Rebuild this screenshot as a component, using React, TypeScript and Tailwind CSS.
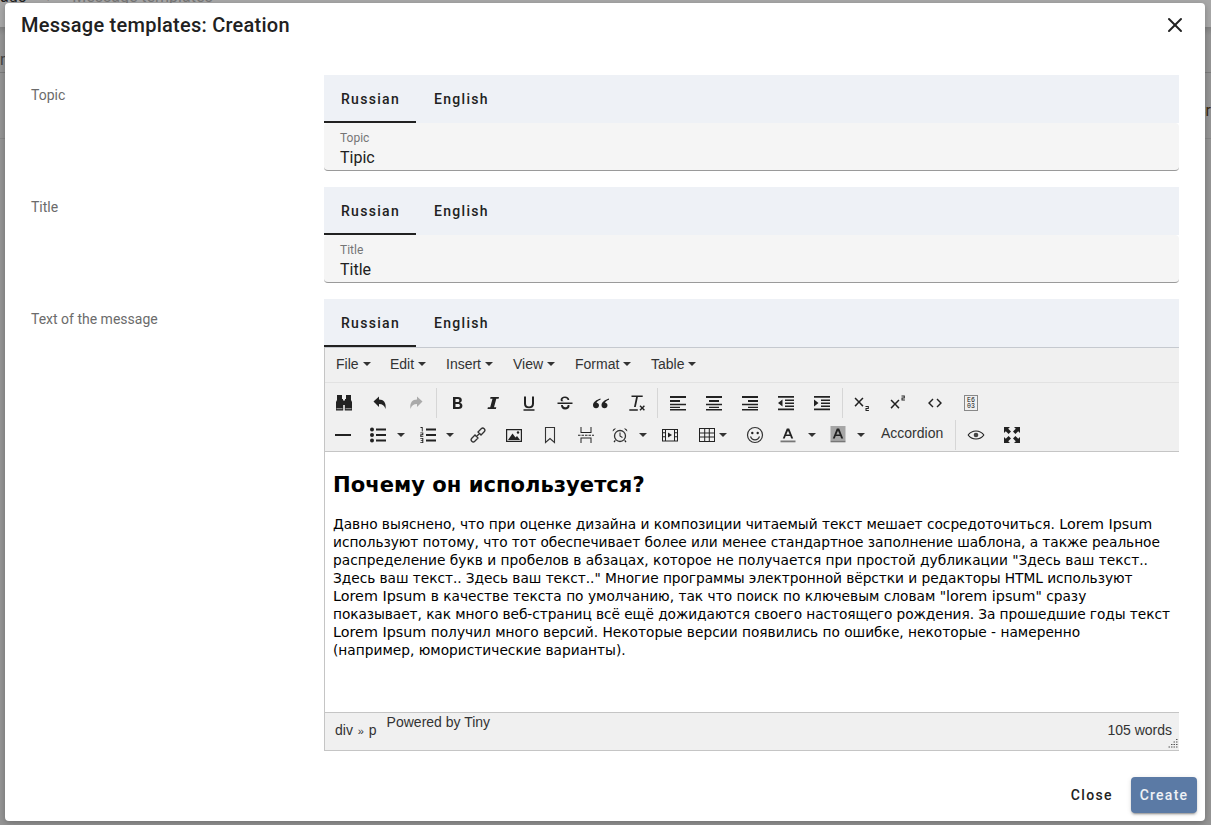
import { ReactNode } from "react";
import { X } from "lucide-react";

const Ico = ({ children, w = 18, h = 18 }: { children: ReactNode; w?: number; h?: number }) => (
  <svg width={w} height={h} viewBox="0 0 18 18" fill="#222" stroke="none">
    {children}
  </svg>
);

const icons: Record<string, ReactNode> = {
  find: (
    <Ico>
      <path d="M2 1h5v4h1v1.500h2V5h1V1h5v5l1 2v8.500H9.800V11H8.200v5.500H1V8l1-2z" />
      <path d="M1.500 14.700h6M10.500 14.700h6" stroke="#ddd" strokeWidth="0.700" fill="none" />
    </Ico>
  ),
  undo: (
    <Ico>
      <path d="M2.500 7.500 8 2.500v3c4.500 0 7.500 3 6.500 9.500-1-3.500-3-5-6.500-5v3z" />
    </Ico>
  ),
  redo: (
    <Ico>
      <path d="M15.500 7.500 10 2.500v3c-4.500 0-7.500 3-6.500 9.500 1-3.500 3-5 6.500-5v3z" fill="#aaa" />
    </Ico>
  ),
  bold: (
    <Ico>
      <path fillRule="evenodd" d="M5 3h5c2.500 0 3.800 1.200 3.800 3.100 0 1.300-.7 2.200-1.800 2.600 1.500.4 2.400 1.500 2.400 3 0 2.100-1.500 3.300-4 3.300H5zM7.500 5v3h2.200c1 0 1.600-.5 1.600-1.500S10.700 5 9.700 5zM7.500 10v3h2.600c1.100 0 1.800-.5 1.800-1.500S11.200 10 10.100 10z" />
    </Ico>
  ),
  italic: (
    <Ico>
      <path d="M6.500 3H15l-.4 1.800h-2.300L10 13.200h2.300L11.900 15H3.500l.4-1.800h2.300l2.300-8.400H6.200z" />
    </Ico>
  ),
  underline: (
    <Ico>
      <path d="M4 2.500h2v7c0 2 1 3 3 3s3-1 3-3v-7h2v7.200c0 3-1.800 4.600-5 4.600s-5-1.600-5-4.600zM3.500 15.300h11v1.500h-11z" />
    </Ico>
  ),
  strike: (
    <Ico>
      <path d="M1.500 8.500h15V10h-15z" />
      <path d="M13.300 6H11.500c-.2-1.200-1.100-1.900-2.500-1.900-1.500 0-2.500.7-2.500 1.700 0 .7.400 1.200 1.300 1.500H5.200C4.800 6.900 4.600 6.400 4.600 5.800 4.600 3.900 6.400 2.600 9 2.600c2.500 0 4.100 1.300 4.300 3.400zM5 11h1.800c.2 1.300 1.100 2.200 2.300 2.200 1.500 0 2.500-.7 2.500-1.800 0-.2 0-.3-.1-.4h1.800c.1.300.2.600.2.900 0 2-1.800 3.500-4.400 3.500S5.100 14 5 11z" />
    </Ico>
  ),
  quote: (
    <Ico>
      <path d="M8.500 4.500C4.500 5.800 1 8 1 11.200c0 1.900 1.400 3 3 3 1.700 0 3-1.200 3-2.800S5.800 8.700 4.500 8.700c.6-1.300 2-2.200 4-3zM17 4.500C13 5.800 9.500 8 9.500 11.200c0 1.900 1.400 3 3 3 1.700 0 3-1.200 3-2.800s-1.200-2.700-2.500-2.700c.6-1.300 2-2.200 4-3z" />
    </Ico>
  ),
  clear: (
    <Ico>
      <path d="M3.500 1.500h11.200v1.600h-4.800L7.800 13H6l2.100-9.900H3.500zM1.300 15.300h8.500v1.400H1.300zM11.500 12.300l1 -1 1.700 1.700 1.700-1.700 1 1-1.700 1.700 1.700 1.700-1 1-1.700-1.700-1.700 1.700-1-1 1.700-1.700z" />
    </Ico>
  ),
  alignLeft: (
    <Ico>
      <path d="M1 2h16v2H1zM1 6h10v2H1zM1 9.700h16v1.500H1zM1 12.700h10v1.300H1zM1 15h16v1.500H1z" />
    </Ico>
  ),
  alignCenter: (
    <Ico>
      <path d="M1 2h16v2H1zM4 6h10v2H4zM1 9.700h16v1.500H1zM4 12.700h10v1.300H4zM1 15h16v1.500H1z" />
    </Ico>
  ),
  alignRight: (
    <Ico>
      <path d="M1 2h16v2H1zM7 6h10v2H7zM1 9.700h16v1.500H1zM7 12.700h10v1.300H7zM1 15h16v1.500H1z" />
    </Ico>
  ),
  outdent: (
    <Ico>
      <path d="M1 2h16v1.700H1zM8 5.500h9v1.500H8zM8 8.500h9V10H8zM8 11.500h9V13H8zM1 14.500h16v1.700H1zM5.500 5.500v7L1 9z" />
    </Ico>
  ),
  indent: (
    <Ico>
      <path d="M1 2h16v1.700H1zM8 5.500h9v1.500H8zM8 8.500h9V10H8zM8 11.500h9V13H8zM1 14.500h16v1.700H1zM1 5.500v7L5.500 9z" />
    </Ico>
  ),
  sub: (
    <Ico>
      <path d="m1.500 4.500 1.100-1.100L6 7l3.400-3.600 1.100 1.100L7 8l3.500 3.600-1.100 1.100L6 9.100l-3.400 3.600-1.100-1.100L5 8zM12.500 12h3.300v3h-2.300v1h2.400v1h-3.400v-3h2.300v-1h-2.300z" />
    </Ico>
  ),
  sup: (
    <Ico>
      <path d="m1.500 6.500 1.100-1.100L6 9l3.400-3.600 1.100 1.100L7 10l3.500 3.600-1.100 1.100L6 11.100l-3.400 3.600-1.100-1.100L5 10zM12.500 1.500h3.300v3h-2.300v1h2.400v1h-3.400v-3h2.300v-1h-2.300z" />
    </Ico>
  ),
  code: (
    <Ico>
      <path d="m6.500 4.500 1 1L4 9l3.500 3.500-1 1L2 9zM11.500 4.500l-1 1L14 9l-3.500 3.500 1 1L16 9z" />
    </Ico>
  ),
  charmap: (
    <svg width={18} height={18} viewBox="0 0 18 18">
      <rect x="2.500" y="1.500" width="13" height="15" fill="none" stroke="#888" strokeWidth="1" />
      <text x="9" y="8" fontSize="6.500" textAnchor="middle" fontFamily="Liberation Mono, monospace" fill="#111">E6</text>
      <text x="9" y="14" fontSize="6.500" textAnchor="middle" fontFamily="Liberation Mono, monospace" fill="#111">03</text>
    </svg>
  ),
  hr: (
    <Ico>
      <path d="M1 8h16v2H1z" />
    </Ico>
  ),
  bullist: (
    <Ico>
      <circle cx="3" cy="3.500" r="2" />
      <circle cx="3" cy="9" r="2" />
      <circle cx="3" cy="14.500" r="2" />
      <path d="M7 2.500h10v2H7zM7 8h10v2H7zM7 13.500h10v2H7z" />
    </Ico>
  ),
  numlist: (
    <Ico>
      <path d="M7 2.500h10v2H7zM7 8h10v2H7zM7 13.500h10v2H7z" />
      <path d="M1.500 1h2.200v4.500H2.800V2H1.500zM1.300 6.500h3v2.700H2.300v1h2v.8h-3V8.300h2v-1h-2zM1.300 12h3v5h-3v-.8h2V15h-1.500v-.8h1.500v-1.400h-2z" />
    </Ico>
  ),
  link: (
    <Ico>
      <g fill="none" stroke="#333" strokeWidth="1.300">
        <path d="M7.500 10.500 6 9 2.800 12.200a2.100 2.100 0 0 0 3 3L9 12l-1-1" />
        <path d="M10.500 7.500 12 9l3.200-3.200a2.100 2.100 0 0 0-3-3L9 6l1 1" />
        <path d="m7 11 4-4" />
      </g>
    </Ico>
  ),
  image: (
    <Ico>
      <path fillRule="evenodd" d="M1 3h16v13H1zM2.200 4.200v10.600h13.600V4.200z" />
      <path d="M3 14 7.500 7.500 10.500 11.500 12 10 15 14z" />
      <circle cx="13" cy="6.500" r="1.200" />
    </Ico>
  ),
  bookmark: (
    <Ico>
      <path d="M4.500 1.500h9v15L9 12.500l-4.500 4z" fill="none" stroke="#333" strokeWidth="1.100" />
    </Ico>
  ),
  pagebreak: (
    <Ico>
      <path d="M3.500 1h1v5h9V1h1v6h-11zM3.500 17h1v-4.500h9V17h1v-5.500h-11zM1 8.800h2.500v1H1zM4.500 8.800h2.500v1H4.500zM8 8.800h2.500v1H8zM11.500 8.800H14v1h-2.500zM15 8.800h2v1h-2z" />
    </Ico>
  ),
  time: (
    <Ico>
      <circle cx="9" cy="10" r="5.500" fill="none" stroke="#333" strokeWidth="1.300" />
      <path d="M8.500 6.500h1v3.300l2.200 1.300-.5.800-2.700-1.600zM1.800 5.500C1.300 3.500 3 2 5 2.500zM16.200 5.500C16.700 3.500 15 2 13 2.500zM3.800 14l1 .8-1.300 1.700-1-.8zM14.200 14l-1 .8 1.300 1.700 1-.8z" />
    </Ico>
  ),
  media: (
    <Ico>
      <path fillRule="evenodd" d="M1 3h16v12.500H1zM2 4v2.200h2V4zM2 7.200v3h2v-3zM2 11.300v3.200h2v-3.200zM14 4v2.200h2V4zM14 7.200v3h2v-3zM14 11.300v3.200h2v-3.200zM5 4v10.500h8V4z" />
      <path d="M7 6.500v5l4-2.500z" />
    </Ico>
  ),
  table: (
    <Ico>
      <path fillRule="evenodd" d="M1 2h16v14H1zM2 3v3.500h4.200V3zM7.200 3v3.500h3.600V3zM11.800 3v3.500H16V3zM2 7.500v3h4.200v-3zM7.200 7.500v3h3.600v-3zM11.800 7.500v3H16v-3zM2 11.500V15h4.200v-3.500zM7.200 11.500V15h3.600v-3.500zM11.800 11.500V15H16v-3.500z" />
    </Ico>
  ),
  emoji: (
    <Ico>
      <circle cx="9" cy="9" r="7.500" fill="none" stroke="#333" strokeWidth="1.200" />
      <circle cx="6.300" cy="7" r="1.200" />
      <circle cx="11.700" cy="7" r="1.200" />
      <path d="M4.500 10.500c.8 2.200 2.400 3.300 4.500 3.300s3.700-1.100 4.500-3.300" fill="none" stroke="#333" strokeWidth="1.200" />
    </Ico>
  ),
  fore: (
    <Ico>
      <path fillRule="evenodd" d="M7.800 2.500h2.400l4 10h-2l-.9-2.500H6.700l-.9 2.500h-2zM9 4.800 7.300 8.500h3.400z" />
      <path d="M1.500 14.500h15v1.800h-15z" fill="#777" />
    </Ico>
  ),
  back: (
    <Ico>
      <path d="M1.500 0h15v14.500h-15z" fill="#a6a6a6" />
      <path fillRule="evenodd" d="M7.800 2.500h2.400l4 10h-2l-.9-2.500H6.700l-.9 2.500h-2zM9 4.800 7.300 8.500h3.400z" />
      <path d="M1.500 14.500h15v1.800h-15z" fill="#777" />
    </Ico>
  ),
  preview: (
    <Ico>
      <path fillRule="evenodd" d="M.500 9c2-3 5-4.500 8.500-4.500s6.500 1.500 8.500 4.500c-2 3-5 4.500-8.500 4.500S2.500 12 .500 9zm1.300 0c1.700 2.200 4.100 3.500 7.200 3.500s5.500-1.300 7.200-3.500C14.500 6.800 12.100 5.500 9 5.500S3.500 6.800 1.800 9z" />
      <circle cx="9" cy="9" r="2.300" fill="#444" />
    </Ico>
  ),
  full: (
    <Ico>
      <path d="M1 1h6L5.200 2.800l2.800 2.800L5.600 8 2.800 5.200 1 7zM17 1v6l-1.800-1.800-2.800 2.800L10 5.600l2.800-2.800L11 1zM1 17v-6l1.800 1.800 2.800-2.800L8 12.400l-2.800 2.800L7 17zM17 17h-6l1.800-1.800-2.800-2.800 2.400-2.400 2.800 2.800L17 11z" />
    </Ico>
  ),
};

const Caret = ({ className = "" }: { className?: string }) => (
  <span className={`inline-block h-0 w-0 border-x-4 border-t-4 border-x-transparent border-t-[#333] ${className}`} />
);

const Btn = ({ icon, className = "w-9" }: { icon: string; className?: string }) => (
  <button className={`flex h-8 shrink-0 items-center justify-center ${className}`}>{icons[icon]}</button>
);

const Sep = ({ className = "ml-[2px] mr-[2px]" }: { className?: string }) => (
  <div className={`h-[30px] w-px shrink-0 bg-[#d6d6d6] ${className}`} />
);

function LangTabs() {
  return (
    <div className="flex h-12 bg-[#eef1f6] text-sm font-medium tracking-[1.3px] text-[#212121]">
      <div className="flex w-[92px] items-center justify-center border-b-2 border-[#212121] pl-px pt-[2px]">Russian</div>
      <div className="flex w-[90px] items-center justify-center pl-px">English</div>
    </div>
  );
}

function Field({ label, value }: { label: string; value: string }) {
  return (
    <div className="flex">
      <div className="w-[319px] pl-[26px] pt-[10px] text-sm leading-5 text-[#6b6b6b]">{label}</div>
      <div className="w-[855px]">
        <LangTabs />
        <div className="h-12 rounded-sm border-b border-[#9a9a9a] bg-[#f5f5f5] px-4 pt-[7px]">
          <div className="text-xs leading-4 text-[#757575]">{label}</div>
          <div className="text-base leading-[24px] text-[#212121]">{value}</div>
        </div>
      </div>
    </div>
  );
}

function Menu({ name, className }: { name: string; className: string }) {
  return (
    <div className={`flex items-center gap-1 ${className}`}>
      <span>{name}</span>
      <Caret />
    </div>
  );
}

// latin words sit a bit wider than the cyrillic in the reference
const Lat = ({ children }: { children: ReactNode }) => <span className="text-[14.35px]">{children}</span>;

function Editor() {
  return (
    <div className="border-l border-[#c5c5c5] font-['Liberation_Sans',sans-serif] text-sm text-[#333]">
      <div className="flex h-[36px] items-center border-t border-b border-t-[#c5c9cf] border-b-[#e2e2e2] bg-[#f0f0f0] pb-[2px] pl-[11px]">
        <Menu name="File" className="w-[54px]" />
        <Menu name="Edit" className="w-[56px]" />
        <Menu name="Insert" className="w-[67px]" />
        <Menu name="View" className="w-[62px]" />
        <Menu name="Format" className="w-[76px]" />
        <Menu name="Table" className="w-[60px]" />
      </div>
      <div className="flex h-[69px] flex-col border-b border-[#c5c5c5] bg-[#f0f0f0] pt-1">
        <div className="flex items-center pl-px">
          <Btn icon="find" />
          <Btn icon="undo" />
          <Btn icon="redo" />
          <Sep />
          <Btn icon="bold" />
          <Btn icon="italic" />
          <Btn icon="underline" />
          <Btn icon="strike" />
          <Btn icon="quote" />
          <Btn icon="clear" />
          <Sep />
          <Btn icon="alignLeft" />
          <Btn icon="alignCenter" />
          <Btn icon="alignRight" />
          <Btn icon="outdent" />
          <Btn icon="indent" />
          <Sep className="ml-[2px] mr-[1px]" />
          <Btn icon="sub" />
          <Btn icon="sup" />
          <Btn icon="code" className="ml-px w-9" />
          <Btn icon="charmap" />
        </div>
        <div className="flex items-center">
          <Btn icon="hr" />
          <Btn icon="bullist" className="ml-[-1px] w-9" />
          <Caret className="ml-[1px] mr-[2px]" />
          <Btn icon="numlist" className="ml-[3px] w-9" />
          <Caret />
          <Btn icon="link" className="ml-[6px] w-9" />
          <Btn icon="image" />
          <Btn icon="bookmark" />
          <Btn icon="pagebreak" />
          <Btn icon="time" className="w-[32px]" />
          <Caret className="ml-[3px]" />
          <Btn icon="media" className="ml-[5px] w-9" />
          <Btn icon="table" className="ml-[2px] w-[34px]" />
          <Caret className="ml-[-5px]" />
          <Btn icon="emoji" className="ml-[10px] w-9" />
          <Btn icon="fore" className="w-[30px]" />
          <Caret className="ml-[5px]" />
          <Btn icon="back" className="ml-[7px] w-[30px]" />
          <Caret className="ml-[4px]" />
          <span className="ml-[16px] mt-[-5px] w-[62px] text-sm text-[#333]">Accordion</span>
          <Sep className="ml-[12px] mr-[2px]" />
          <Btn icon="preview" />
          <Btn icon="full" />
        </div>
      </div>
      <div className="h-[260px] whitespace-nowrap bg-white px-2 pt-3 font-['DejaVu_Sans',sans-serif] text-[13.76px] leading-[18px] text-black">
        <h1 className="mb-[18px] mt-[8px] text-[21.1px] font-bold leading-[25px]">Почему он используется?</h1>
        <p className="tracking-[-0.03px]">
          Давно выяснено, что при оценке дизайна и композиции читаемый текст мешает сосредоточиться. <Lat>Lorem Ipsum</Lat>
        </p>
        <p className="tracking-[-0.058px]">
          используют потому, что тот обеспечивает более или менее стандартное заполнение шаблона, а также реальное
        </p>
        <p>распределение букв и пробелов в абзацах, которое не получается при простой дубликации "Здесь ваш текст..</p>
        <p className="tracking-[-0.05px]">
          Здесь ваш текст.. Здесь ваш текст.." Многие программы электронной вёрстки и редакторы HTML используют
        </p>
        <p>
          <Lat>Lorem Ipsum</Lat> в качестве текста по умолчанию, так что поиск по ключевым словам "<Lat>lorem ipsum</Lat>" сразу
        </p>
        <p className="tracking-[-0.076px]">
          показывает, как много веб-страниц всё ещё дожидаются своего настоящего рождения. За прошедшие годы текст
        </p>
        <p>
          <Lat>Lorem Ipsum</Lat> получил много версий. Некоторые версии появились по ошибке, некоторые - намеренно
        </p>
        <p>(например, юмористические варианты).</p>
      </div>
      <div className="relative flex h-[39px] border-y border-[#c5c5c5] bg-[#f0f0f0] pl-[10px]">
        <div className="mt-[7px]">
          div <span className="px-px text-[11px]">»</span> p
        </div>
        <div className="ml-[10px] mt-[-1px]">Powered by Tiny</div>
        <div className="ml-auto mr-[7px] mt-[7px]">105 words</div>
        <svg className="absolute bottom-px right-px" width="10" height="10" viewBox="0 0 10 10" fill="#555">
          <path d="M8 0h1.500v1H8zM8 2.500h1.500v1H8zM5.500 2.500H7v1H5.500zM8 5h1.500v1H8zM5.500 5H7v1H5.500zM3 5h1.500v1H3zM8 7.500h1.500v1H8zM5.500 7.500H7v1H5.500zM3 7.500h1.500v1H3zM.5 7.500H2v1H.5z" />
        </svg>
      </div>
    </div>
  );
}

// dimmed page behind the dialog, only its edges show
function BackPage() {
  return (
    <div className="flex h-full flex-col bg-[#959595]">
      <div className="flex h-[27px] shrink-0 items-start gap-5 bg-[#a8a8a8] text-base">
        <span className="mt-[-15px] text-[#222]">ado</span>
        <span className="mt-[-15px] text-[#222]">&gt;</span>
        <span className="ml-[-3px] mt-[-15px] text-[#777]">Message templates</span>
      </div>
      <div className="h-[8px] shrink-0 bg-gradient-to-b from-[#828282] to-[#959595]" />
      <div className="h-[37px] shrink-0 pt-[15px] text-base leading-5 text-[#444]">n</div>
      <div className="h-px shrink-0 bg-[#7d7d7d]" />
      <div className="flex h-[65px] shrink-0 items-end justify-end pb-[17px] text-base leading-5 text-[#3d2a12]">Cr</div>
      <div className="h-px shrink-0 bg-[#888]" />
    </div>
  );
}

export default function App() {
  return (
    <div className="relative h-[825px] w-[1211px] overflow-hidden font-['Roboto',sans-serif]">
      <BackPage />
      <div className="absolute left-[5px] top-[3px] flex h-[818px] w-[1200px] flex-col rounded bg-white shadow-[0_2px_6px_rgba(0,0,0,0.25)]">
        <div className="flex h-[46px] items-center justify-between pb-[2px] pl-4 pr-[18px]">
          <h2 className="text-xl font-medium tracking-[0.25px] text-[#212121]">Message templates: Creation</h2>
          <X size={24} strokeWidth={2} className="text-[#212121]" />
        </div>
        <div className="flex flex-col gap-4 pt-[26px]">
          <Field label="Topic" value="Tipic" />
          <Field label="Title" value="Title" />
          <div className="flex">
            <div className="w-[319px] pl-[26px] pt-[10px] text-sm leading-5 text-[#6b6b6b]">Text of the message</div>
            <div className="w-[855px]">
              <LangTabs />
              <Editor />
            </div>
          </div>
        </div>
        <div className="mt-auto flex items-center justify-end pb-[8px] pr-[8px] text-sm font-medium tracking-[1.25px]">
          <button className="mr-[18px] tracking-[1.4px] text-[#212121]">Close</button>
          <button className="h-9 w-[66px] rounded bg-[#5b7aa5] text-white/90 shadow-[0_3px_1px_-2px_rgba(0,0,0,0.2),0_2px_2px_0_rgba(0,0,0,0.14),0_1px_5px_0_rgba(0,0,0,0.12)]">
            Create
          </button>
        </div>
      </div>
    </div>
  );
}
